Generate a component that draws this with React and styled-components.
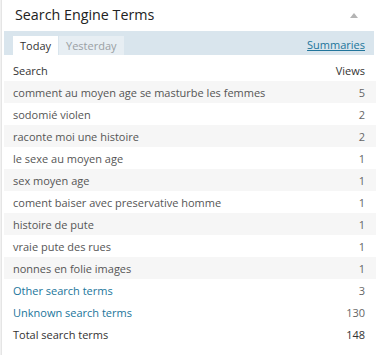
import React from "react";
import styled, { createGlobalStyle } from "styled-components";

const Global = createGlobalStyle`
  html, body { margin: 0; padding: 0; background: #f1f1f1; }
  body { font-family: "Open Sans", "Liberation Sans", sans-serif; }
`;

const Panel = styled.div`
  margin-left: 1px;
  border-left: 1px solid #e5e5e5;
  background: #fff;
  height: 355px;
  box-sizing: border-box;
`;

const TitleBar = styled.div`
  display: flex;
  align-items: center;
  justify-content: space-between;
  height: 30px;
  padding: 0 29px 0 13px;
`;

const Title = styled.h3`
  margin: 0;
  font-size: 14.3px;
  font-weight: 400;
  color: #222;
  line-height: 28px;
`;

const Arrow = styled.span`
  width: 0;
  height: 0;
  border-left: 4px solid transparent;
  border-right: 4px solid transparent;
  border-bottom: 5px solid #b4b4b4;
`;

const Body = styled.div`
  padding: 0 13px 0 2px;
`;

const TabBar = styled.div`
  display: flex;
  align-items: flex-end;
  height: 24px;
  margin-top: 1px;
  background: #d9e5ed;
  padding-left: 9px;
  padding-right: 9px;
`;

const Tab = styled.div`
  height: 19px;
  line-height: 19px;
  padding: 0 7px;
  font-size: 11px;
  color: ${(p) => (p.$active ? "#333" : "#9aa0a4")};
  background: ${(p) => (p.$active ? "#fff" : "#e7eef3")};
  margin-right: 1px;
`;

const SummaryLink = styled.a`
  margin-left: auto;
  align-self: center;
  font-size: 11px;
  color: #21759b;
  text-decoration: underline;
  padding-top: 3px;
`;

const Table = styled.div`
  margin-top: 4px;
  margin-right: -2px;
`;

const Row = styled.div`
  display: flex;
  justify-content: space-between;
  align-items: center;
  height: 22px;
  padding: 0 11px 0 9px;
  font-size: 11px;
  color: ${(p) => p.$color || "#555"};
  background: ${(p) => (p.$striped ? "#f6f6f6" : "transparent")};
`;

const Label = styled.span``;
const Count = styled.span`
  color: ${(p) => p.$color || "#666"};
`;

const rows = [
  ["comment au moyen age se masturbe les femmes", 5],
  ["sodomié violen", 2],
  ["raconte moi une histoire", 2],
  ["le sexe au moyen age", 1],
  ["sex moyen age", 1],
  ["coment baiser avec preservative homme", 1],
  ["histoire de pute", 1],
  ["vraie pute des rues", 1],
  ["nonnes en folie images", 1],
];

export default function App() {
  return (
    <>
      <Global />
      <Panel>
        <TitleBar>
          <Title>Search Engine Terms</Title>
          <Arrow />
        </TitleBar>
        <Body>
          <TabBar>
            <Tab $active>Today</Tab>
            <Tab>Yesterday</Tab>
            <SummaryLink>Summaries</SummaryLink>
          </TabBar>
          <Table>
            <Row $color="#333">
              <Label>Search</Label>
              <Count $color="#333">Views</Count>
            </Row>
            {rows.map(([t, n], i) => (
              <Row key={t} $striped={i % 2 === 0}>
                <Label>{t}</Label>
                <Count>{n}</Count>
              </Row>
            ))}
            <Row $color="#21759b">
              <Label>Other search terms</Label>
              <Count>3</Count>
            </Row>
            <Row $color="#21759b">
              <Label>Unknown search terms</Label>
              <Count>130</Count>
            </Row>
            <Row $color="#333">
              <Label>Total search terms</Label>
              <Count $color="#333">148</Count>
            </Row>
          </Table>
        </Body>
      </Panel>
    </>
  );
}
